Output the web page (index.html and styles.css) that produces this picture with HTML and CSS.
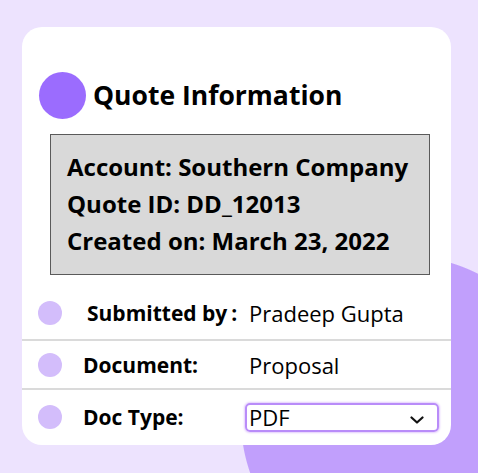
FILE: index.html
```html
<!DOCTYPE html>
<html lang="en">
<head>
<meta charset="utf-8">
<title>Quote Information</title>
<link rel="stylesheet" href="styles.css">
</head>
<body>
<main class="card">
  <header class="card-header">
    <span class="dot-lg"></span>
    <h1 class="title">Quote Information</h1>
  </header>
  <section class="summary">
    <p class="summary-line">Account: Southern Company</p>
    <p class="summary-line">Quote ID: DD_12013</p>
    <p class="summary-line">Created on: March 23, 2022</p>
  </section>
  <div class="rows">
    <div class="row row-first">
      <span class="dot"></span>
      <span class="label label-indent">Submitted by<span class="colon">:</span></span>
      <span class="value">Pradeep Gupta</span>
    </div>
    <div class="row row-mid">
      <span class="dot"></span>
      <span class="label">Document:</span>
      <span class="value">Proposal</span>
    </div>
    <div class="row row-last">
      <span class="dot"></span>
      <span class="label">Doc Type:</span>
      <div class="select">
        <span class="select-text">PDF</span>
        <svg class="chev" width="14" height="8" viewBox="0 0 14 8"><path d="M1.5 1.5 L7 6.5 L12.5 1.5" fill="none" stroke="#111" stroke-width="2.2" stroke-linecap="round" stroke-linejoin="round"/></svg>
      </div>
    </div>
  </div>
</main>
</body>
</html>
```
FILE: styles.css
```css
* { box-sizing: border-box; }
html, body { margin: 0; padding: 0; }
body {
  width: 478px;
  height: 473px;
  overflow: hidden;
  background-color: #ede3fe;
  background-image: radial-gradient(circle 163px at 404px 419px, #c19ffc 162.5px, rgba(237, 227, 254, 0) 163.5px);
  background-repeat: no-repeat;
  font-family: "Open Sans", "Liberation Sans", sans-serif;
  color: #000;
}
.card {
  width: 429px;
  height: 418px;
  margin: 0 0 0 22px;
  position: relative;
  top: 27px;
  background: #fff;
  border-radius: 20px;
  padding-top: 45px;
}
.card-header {
  display: flex;
  align-items: center;
  gap: 7px;
  padding-left: 17px;
  height: 47px;
}
.dot-lg {
  width: 47px;
  height: 47px;
  border-radius: 50%;
  background: #9b6cfe;
  flex: none;
}
.title {
  margin: 0;
  font-size: 26.5px;
  font-weight: 700;
  line-height: 47px;
}
.summary {
  margin: 15px 0 0 28px;
  width: 380px;
  height: 141px;
  border: 1px solid #5a5a5a;
  background: #d9d9d9;
  padding: 13px 0 0 16px;
}
.summary-line {
  margin: 0;
  font-size: 24px;
  font-weight: 700;
  line-height: 37px;
}
.rows {
  margin-top: 11px;
}
.row {
  display: grid;
  grid-template-columns: 24px 145px 1fr;
  column-gap: 21px;
  align-items: center;
  padding-left: 16px;
}
.row-first { height: 55px; border-bottom: 2px solid #dadada; }
.row-mid { height: 49px; border-bottom: 2px solid #dadada; }
.row-last { height: 54px; }
.dot {
  width: 24px;
  height: 24px;
  border-radius: 50%;
  background: #d3bdfb;
}
.label {
  font-size: 21px;
  font-weight: 700;
  white-space: nowrap;
}
.label-indent { padding-left: 4px; }
.colon { margin-left: 4px; }
.value {
  font-size: 22px;
  font-weight: 400;
}
.select {
  margin-left: -4px;
  width: 194px;
  height: 29px;
  border: 2px solid #b98cf9;
  border-radius: 5px;
  box-shadow: 0 0 2px 1px #e3ccfd;
  display: flex;
  align-items: center;
  justify-content: space-between;
  padding: 0 13px 0 2px;
}
.select-text {
  font-size: 22px;
  line-height: 25px;
}
.chev { margin-top: 6px; }
```
